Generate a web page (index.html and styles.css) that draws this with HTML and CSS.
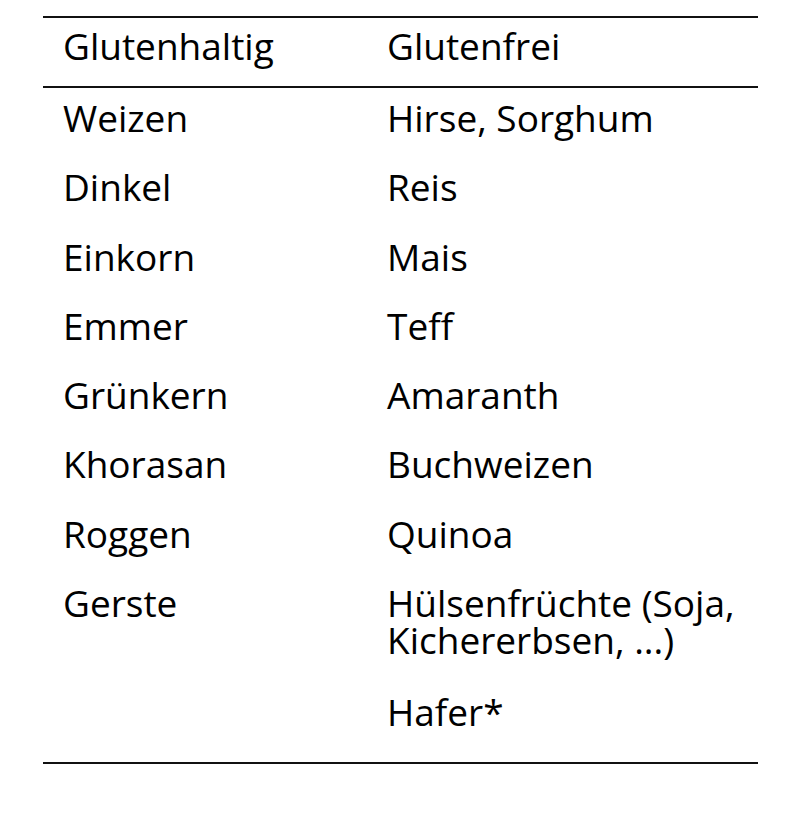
FILE: index.html
```html
<!DOCTYPE html>
<html lang="de">
<head>
<meta charset="utf-8">
<title>Getreide</title>
<link rel="stylesheet" href="styles.css">
</head>
<body>
<table class="grain-table">
  <colgroup>
    <col class="col-a">
    <col class="col-b">
  </colgroup>
  <thead>
    <tr><th>Glutenhaltig</th><th>Glutenfrei</th></tr>
  </thead>
  <tbody>
    <tr><td>Weizen</td><td>Hirse, Sorghum</td></tr>
    <tr><td>Dinkel</td><td>Reis</td></tr>
    <tr><td>Einkorn</td><td>Mais</td></tr>
    <tr><td>Emmer</td><td>Teff</td></tr>
    <tr><td>Grünkern</td><td>Amaranth</td></tr>
    <tr><td>Khorasan</td><td>Buchweizen</td></tr>
    <tr><td>Roggen</td><td>Quinoa</td></tr>
    <tr class="multi"><td>Gerste</td><td>Hülsenfrüchte (Soja, Kichererbsen, ...)</td></tr>
    <tr class="last"><td></td><td>Hafer*</td></tr>
  </tbody>
</table>
</body>
</html>
```
FILE: styles.css
```css
html, body {
  margin: 0;
  padding: 0;
  background: #ffffff;
}
body {
  padding: 16px 0 0 43px;
  font-family: "Open Sans", "Noto Sans", sans-serif;
  color: #000000;
}
.grain-table {
  border-collapse: collapse;
  width: 715px;
  table-layout: fixed;
  font-size: 37px;
  line-height: 37px;
  border-top: 2px solid #111111;
  border-bottom: 2px solid #111111;
}
.col-a { width: 324px; }
.col-b { width: 391px; }
th, td {
  box-sizing: border-box;
  text-align: left;
  vertical-align: top;
  padding: 11px 20px 21.3px 20px;
  font-weight: 400;
}
th {
  padding-top: 9px;
  padding-bottom: 22px;
  border-bottom: 2px solid #111111;
}
.multi td { padding-bottom: 24px; }
.last td { padding-bottom: 32px; }
```
